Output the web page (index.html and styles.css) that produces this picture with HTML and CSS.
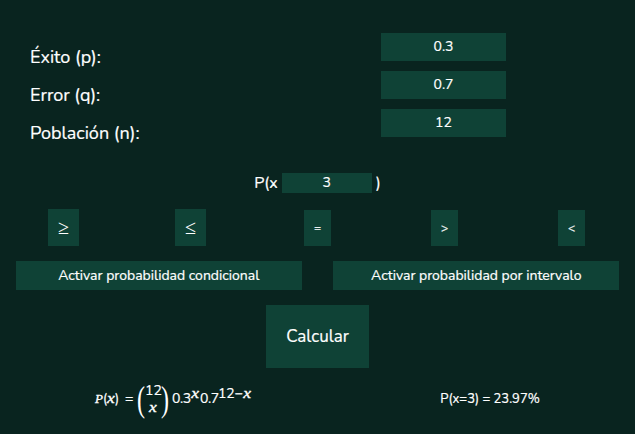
FILE: index.html
```html
<!DOCTYPE html>
<html lang="es">
<head>
<meta charset="utf-8">
<title>Distribución binomial</title>
<link rel="stylesheet" href="styles.css">
</head>
<body>
<main class="calculator">
  <section class="fields">
    <div class="field"><label for="p">Éxito (p):</label><input id="p" value="0.3"></div>
    <div class="field"><label for="q">Error (q):</label><input id="q" value="0.7"></div>
    <div class="field"><label for="n">Población (n):</label><input id="n" value="12"></div>
  </section>
  <div class="query"><span>P(x</span><input value="3" aria-label="x"><span>)</span></div>
  <div class="operators">
    <button class="wide">≥</button>
    <button class="wide">≤</button>
    <button>=</button>
    <button>&gt;</button>
    <button>&lt;</button>
  </div>
  <div class="toggles">
    <button>Activar probabilidad condicional</button>
    <button>Activar probabilidad por intervalo</button>
  </div>
  <div class="submit"><button>Calcular</button></div>
  <div class="results">
    <div class="formula">
      <span class="fn"><i>P</i>(<i class="x">x</i>)</span><span class="eq">=</span><span class="paren">(</span><span class="binom"><span>12</span><i class="x">x</i></span><span class="paren">)</span><span class="base">0.3</span><span class="sup narrow"><i class="x">x</i></span><span class="base second">0.7</span><span class="sup">12−<i class="x">x</i></span>
    </div>
    <div class="answer">P(x=3) = 23.97%</div>
  </div>
</main>
</body>
</html>
```
FILE: styles.css
```css
* { box-sizing: border-box; }

body {
  margin: 0;
  background: #fff;
  color: #fff;
  font-family: Nunito, Lato, sans-serif;
  -webkit-text-stroke: 0.2px;
}

.calculator {
  height: 434px;
  padding-top: 33px;
  background: #09241f;
}

input, button {
  border: 0;
  padding: 0;
  margin: 0;
  background: #0f4236;
  color: #fff;
  font: inherit;
  font-size: 14px;
  text-align: center;
}

.fields { display: grid; gap: 10px; }

.field {
  display: flex;
  height: 28px;
  padding-left: 30px;
}

.field label {
  width: 351px;
  padding-top: 10px;
  font-size: 18px;
  line-height: 28px;
}

.field input { width: 125px; height: 28px; padding-bottom: 2px; }

.query {
  display: flex;
  justify-content: center;
  align-items: center;
  gap: 4px;
  height: 20px;
  margin-top: 36px;
  font-size: 16px;
}

.query input { width: 90px; height: 20px; padding-bottom: 1px; }

.operators {
  display: grid;
  grid-template-columns: repeat(5, 1fr);
  justify-items: center;
  align-items: end;
  height: 37px;
  margin-top: 16px;
}

.operators button {
  width: 27px;
  height: 36px;
  font-size: 12px;
}

.operators .wide {
  width: 31px;
  height: 37px;
  font-family: "Liberation Serif", serif;
  font-size: 20px;
  -webkit-text-stroke: 0;
}

.toggles {
  display: grid;
  grid-template-columns: 1fr 1fr;
  justify-items: center;
  margin-top: 15px;
}

.toggles button { width: 90%; height: 29px; }

.submit { display: flex; justify-content: center; margin-top: 15px; }

.submit button {
  width: 103px;
  height: 63px;
  font-size: 17px;
}

.results {
  display: grid;
  grid-template-columns: 345px 290px;
  height: 60px;
}

.formula {
  display: flex;
  align-items: center;
  padding-left: 95px;
  font-size: 14px;
  line-height: 16px;
  white-space: nowrap;
}

.fn { width: 26px; font-size: 13px; }

.formula i {
  font-family: "Liberation Serif", serif;
  -webkit-text-stroke: 0.35px;
}

.formula .x {
  display: inline-block;
  width: 8px;
  font-size: 14px;
  text-align: center;
  transform: scaleX(1.25);
}

.eq { width: 8px; margin: 0 4px; }

.paren {
  font-family: "Liberation Serif", serif;
  font-size: 16px;
  transform: scale(1.5, 2.3);
  width: 8px;
  text-align: center;
  -webkit-text-stroke: 0;
}

.binom { display: grid; justify-items: center; row-gap: 1px; width: 16px; }

.base { width: 18px; margin-left: 3px; letter-spacing: -0.4px; }

.base.second { margin-left: 1px; }

.sup { transform: translateY(-5px); letter-spacing: -0.2px; }

.sup.narrow { width: 9px; text-align: center; }

.answer { font-size: 13px; line-height: 62px; text-align: center; }
```
